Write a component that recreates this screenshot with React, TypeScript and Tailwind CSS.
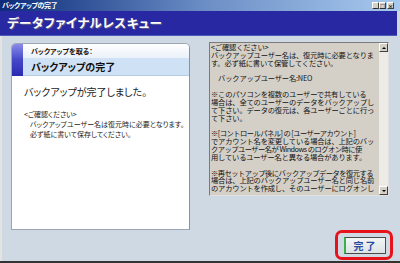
const jp = "font-['Noto_Sans_CJK_JP','Noto_Sans',sans-serif]";

const noteLines = [
  "<ご確認ください>",
  "バックアップユーザー名は、復元時に必要となりま",
  "す。必ず紙に書いて保管してください。",
  "",
  "　バックアップユーザー名:NEO",
  "",
  "※このパソコンを複数のユーザーで共有している",
  "場合は、全てのユーザーのデータをバックアップし",
  "て下さい。データの復元は、各ユーザーごとに行っ",
  "て下さい。",
  "",
  "※[コントロールパネル] の [ユーザーアカウント]",
  "でアカウント名を変更している場合は、上記のバッ",
  "クアップユーザー名が Windows のログオン時に使",
  "用しているユーザー名と異なる場合があります。",
  "",
  "※再セットアップ後にバックアップデータを復元する",
  "場合は、上記のバックアップユーザー名と同じ名前",
  "のアカウントを作成し、そのユーザーにログオンし",
];

const TitleButton = ({ children }: { children: React.ReactNode }) => (
  <div className="w-[7px] h-[7px] bg-[#d4d0c8] border-t border-l border-t-white border-l-white border-r border-b border-r-[#404040] border-b-[#404040] flex items-center justify-center text-[5px] leading-none text-black font-bold">
    {children}
  </div>
);

const ScrollButton = ({ up }: { up?: boolean }) => (
  <div className="h-[9px] bg-[#d4d0c8] border-t border-l border-t-white border-l-white border-r border-b border-r-[#404040] border-b-[#404040] flex items-center justify-center">
    <div
      className={
        up
          ? "w-0 h-0 border-l-[2px] border-r-[2px] border-b-[2px] border-l-transparent border-r-transparent border-b-black"
          : "w-0 h-0 border-l-[2px] border-r-[2px] border-t-[2px] border-l-transparent border-r-transparent border-t-black"
      }
    />
  </div>
);

export default function App() {
  return (
    <div className={`w-[400px] h-[263px] flex flex-col overflow-hidden bg-[#cfd9e3] ${jp}`}>
      {/* Title bar */}
      <div className="h-[11px] flex items-center justify-between pl-[2px] pr-[6px] bg-gradient-to-r from-[#0e2a78] via-[#6a8cc4] to-[#a8caee]">
        <span className="text-[7px] leading-none text-white font-bold tracking-[-0.4px] [font-feature-settings:'palt']">
          バックアップの完了
        </span>
        <div className="flex">
          <TitleButton>_</TitleButton>
          <TitleButton>□</TitleButton>
          <div className="ml-[1px]">
            <TitleButton>×</TitleButton>
          </div>
        </div>
      </div>

      {/* Banner */}
      <div className="h-[25px] flex items-center pl-[7px] bg-[#2828a2] border-b border-b-[#4a5ab8] mr-[3px]">
        <span className="text-[12.5px] leading-none font-bold text-white [text-shadow:1px_1px_0_#5a5a8a] [font-feature-settings:'palt'] tracking-[0.5px]">
          データファイナルレスキュー
        </span>
      </div>

      {/* Body */}
      <div className="flex-1 flex pt-[6px] border-l-2 border-l-[#e4e4e4] pl-[9px]">
        {/* Left card */}
        <div className="mt-[1px] w-[179px] h-[187px] flex flex-col bg-white border border-[#9aa6b4] border-r-[#8a929c] rounded-t-[5px] overflow-hidden">
          <div className="h-[32px] flex">
            <div className="w-[11px] bg-gradient-to-b from-[#8a8ae8] via-[#4646c8] to-[#2a2ab0]" />
            <div className="flex-1 flex flex-col">
              <div className="h-[14px] flex items-center pl-[8px] bg-gradient-to-b from-white to-[#eaf1f9]">
                <span className="text-[7px] leading-none font-bold text-[#111] [font-feature-settings:'palt']">
                  バックアップを取る：
                </span>
              </div>
              <div className="flex-1 flex items-center pl-[8px] bg-[#cfe1f4] border-b border-b-[#b8cce0]">
                <span className="text-[10px] leading-none font-bold text-[#111] [font-feature-settings:'palt']">
                  バックアップの完了
                </span>
              </div>
            </div>
          </div>
          <div className="flex-1 pl-[12px] pt-[10px] text-[#222] [font-feature-settings:'palt']">
            <div className="text-[10px] leading-[11px]">バックアップが完了しました。</div>
            <div className="mt-[12px] text-[7px] leading-[10px]">
              <div>&lt;ご確認ください&gt;</div>
              <div className="pl-[6px]">バックアップユーザー名は復元時に必要となります。</div>
              <div className="pl-[6px]">必ず紙に書いて保存してください。</div>
            </div>
          </div>
        </div>

        {/* Right column */}
        <div className="ml-[19px] w-[184px] flex flex-col justify-between pb-[1px]">
          <div className="w-[180px] h-[154px] flex bg-[#d4d0c8] border border-[#7a7a7a] border-r-[#e0e0e0] border-b-[#e0e0e0]">
            <div className="flex-1 overflow-hidden pl-[1px] pt-[1px] text-[7.3px] leading-[7.85px] text-[#111] whitespace-pre tracking-[-0.2px]">
              {noteLines.map((l, i) => (
                <div key={i} className={l.length > 23 ? "h-[7.85px] tracking-[-0.55px]" : "h-[7.85px]"}>
                  {l}
                </div>
              ))}
            </div>
            <div className="w-[9px] flex flex-col bg-[#ecebe6]">
              <ScrollButton up />
              <div className="flex-1" />
              <ScrollButton />
            </div>
          </div>

          <div className="self-end w-[58px] h-[30px] border-[3px] border-[#e8121a] rounded-[7px] flex items-center justify-end pr-[4px] pt-[1px]">
            <button className="w-[42px] h-[17px] flex items-center justify-center bg-gradient-to-b from-[#f4f6f6] to-[#dde2e4] border border-[#4a4a4a] border-l-[#3ab04a] border-l-2 text-[10px] leading-none font-bold text-[#2a4c9c] tracking-[2px]">
              完了
            </button>
          </div>
        </div>
      </div>

      {/* Bottom border */}
      <div className="h-[2px] bg-[#333]" />
    </div>
  );
}
